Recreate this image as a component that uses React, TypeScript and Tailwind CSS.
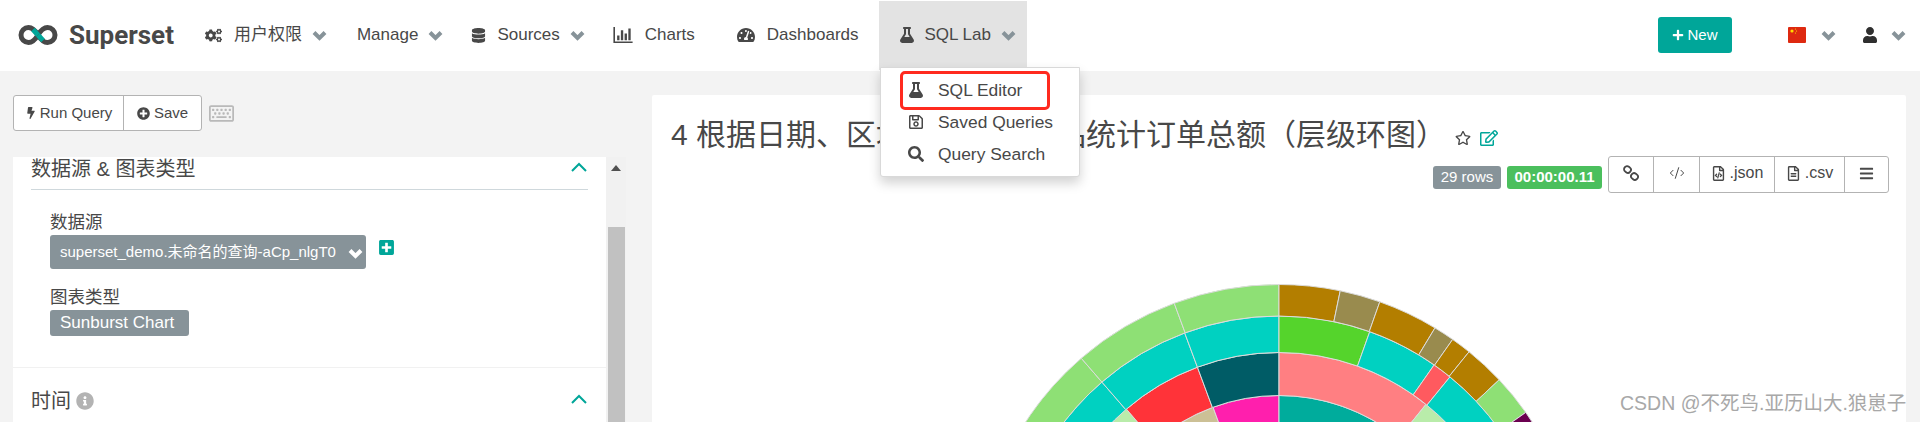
import type { ReactNode } from "react";
import {
  FaBars,
  FaBolt,
  FaCogs,
  FaDatabase,
  FaFlask,
  FaInfoCircle,
  FaPlus,
  FaPlusCircle,
  FaPlusSquare,
  FaRegEdit,
  FaRegFileAlt,
  FaRegFileCode,
  FaRegKeyboard,
  FaRegSave,
  FaRegStar,
  FaSearch,
  FaTachometerAlt,
  FaUser,
} from "react-icons/fa";
import { CodeXml } from "lucide-react";

const FONT = "font-['Liberation_Sans','Noto_Sans_CJK_SC',sans-serif]";

// radii of the rings, inner to outer
const RADII = [135, 191, 234, 270.5, 302];
const CX = 320;
const CY = 386.5;

type Seg = [number, number, string];

const RINGS: Seg[][] = [
  [
    [-70, -20.2, "#ccc096"],
    [-20.2, 0, "#ff1fad"],
    [0, 70, "#00ac9c"],
  ],
  [
    [-70, -40.7, "#b9ecaa"],
    [-40.7, -20.4, "#ff3339"],
    [-20.4, 0, "#005c66"],
    [0, 38.9, "#ff7f82"],
    [38.9, 70, "#b9ecaa"],
  ],
  [
    [-70, -40.9, "#00d1c1"],
    [-40.9, -20.4, "#00d1c1"],
    [-20.4, 0, "#00d1c1"],
    [0, 19.6, "#55d42c"],
    [19.6, 35, "#00d1c1"],
    [35, 39.2, "#ff5a5f"],
    [39.2, 70, "#00d1c1"],
  ],
  [
    [-70, -40.9, "#8ee075"],
    [-40.9, -20.3, "#8ee075"],
    [-20.3, 0, "#8ee075"],
    [0, 11.7, "#b37e00"],
    [11.7, 19.5, "#998b4e"],
    [19.5, 31.1, "#b37e00"],
    [31.1, 35.1, "#998b4e"],
    [35.1, 39, "#b37e00"],
    [39, 46.8, "#b37e00"],
    [46.8, 54.8, "#8ee075"],
    [54.8, 70, "#6b0050"],
  ],
];

function pt(r: number, deg: number) {
  const a = (deg * Math.PI) / 180;
  return `${(CX + r * Math.sin(a)).toFixed(2)} ${(CY - r * Math.cos(a)).toFixed(2)}`;
}

function arc(r0: number, r1: number, a0: number, a1: number) {
  return `M${pt(r0, a0)} L${pt(r1, a0)} A${r1} ${r1} 0 0 1 ${pt(r1, a1)} L${pt(r0, a1)} A${r0} ${r0} 0 0 0 ${pt(r0, a0)} Z`;
}

function Sunburst() {
  return (
    <svg width="640" height="222" viewBox="0 0 640 222" className="mx-auto mt-[7px] shrink-0">
      {RINGS.map((ring, i) =>
        ring.map(([a0, a1, color]) => (
          <path
            key={`${i}-${a0}`}
            d={arc(RADII[i], RADII[i + 1], a0, a1)}
            fill={color}
            stroke="#dcdcdc"
            strokeWidth="1"
          />
        )),
      )}
    </svg>
  );
}

function Logo() {
  return (
    <svg width="40" height="22" viewBox="0 0 40 22" fill="none">
      <path
        d="M20 11 C17 6 14 3.5 10.5 3.5 A7.5 7.5 0 0 0 10.5 18.5 C14 18.5 17 16 20 11 C23 6 26 3.5 29.5 3.5 A7.5 7.5 0 0 1 29.5 18.5 C26 18.5 23 16 20 11 Z"
        stroke="#484848"
        strokeWidth="5"
      />
      <path d="M15 5.5 L20 11" stroke="#00a699" strokeWidth="5" />
      <path d="M20 11 L25 16.5" stroke="#00a699" strokeWidth="5" />
    </svg>
  );
}

function Caret({ className = "" }: { className?: string }) {
  return (
    <svg width="15" height="11" viewBox="0 0 15 11" fill="none" className={className}>
      <path d="M2 2.5 L7.5 8 L13 2.5" stroke="currentColor" strokeWidth="4" />
    </svg>
  );
}

function ChevronUp() {
  return (
    <svg width="16" height="10" viewBox="0 0 16 10" fill="none" className="text-[#00a699]">
      <path d="M1 9 L8 2 L15 9" stroke="currentColor" strokeWidth="2" />
    </svg>
  );
}

function BarChartIcon() {
  return (
    <svg width="20" height="16" viewBox="0 0 18 15" className="mr-[12px]" fill="currentColor">
      <path d="M0 0h1.5v13.5H18V15H0z" />
      <path d="M3.5 8h2.2v4.5H3.5zM7 3h2.2v9.5H7zM10.5 6h2.2v6.5h-2.2zM14 1.5h2.2v11H14z" />
    </svg>
  );
}

function LinkIcon() {
  return (
    <svg width="16" height="16" viewBox="0 0 16 16" fill="none" stroke="currentColor" strokeWidth="1.8">
      <rect x="1" y="1.5" width="7" height="6" rx="2.8" transform="rotate(40 4.5 4.5)" />
      <rect x="8" y="8.5" width="7" height="6" rx="2.8" transform="rotate(40 11.5 11.5)" />
    </svg>
  );
}

function NavItem({ icon, label, caret = true, className = "" }: { icon?: ReactNode; label: string; caret?: boolean; className?: string }) {
  return (
    <div className={`flex items-center text-[17px] text-[#484848] ${className}`}>
      {icon}
      <span>{label}</span>
      {caret && <Caret className="ml-[10px] text-[#879399]" />}
    </div>
  );
}

function Navbar() {
  return (
    <nav className="flex h-[71px] shrink-0 items-center bg-white pb-[1px]">
      <div className="ml-[18px] flex items-center">
        <Logo />
        <span className="ml-[11px] font-['Roboto',sans-serif] text-[26px] font-bold text-[#484848]">Superset</span>
      </div>
      <NavItem className="ml-[31px]" icon={<FaCogs className="mr-[12px] text-[17px]" />} label="用户权限" />
      <NavItem className="ml-[30px]" label="Manage" />
      <NavItem className="ml-[28px]" icon={<FaDatabase className="mr-[11px] text-[15px]" />} label="Sources" />
      <NavItem className="ml-[28px]" icon={<BarChartIcon />} label="Charts" caret={false} />
      <NavItem className="ml-[42px]" icon={<FaTachometerAlt className="mr-[12px] text-[18px]" />} label="Dashboards" caret={false} />
      <div className="ml-[20px] mt-[1px] flex h-[69px] w-[148px] items-center bg-[#e3e3e3] pl-[20px] pb-[1px] text-[17px] text-[#484848]">
        <FaFlask className="mr-[10px] text-[16px]" />
        <span>SQL Lab</span>
        <Caret className="ml-[10px] text-[#879399]" />
      </div>
      <div className="ml-auto flex h-[36px] w-[74px] items-center justify-center rounded-[3px] bg-[#00a699] text-[15px] text-white">
        <FaPlus className="mr-[3px] text-[12px]" />
        New
      </div>
      <svg width="18" height="16" viewBox="0 0 18 16" className="ml-[56px]">
        <rect width="18" height="16" rx="1" fill="#de2910" />
        <circle cx="4" cy="4" r="1.6" fill="#ffde00" />
        <circle cx="7.5" cy="2" r="0.6" fill="#ffde00" />
        <circle cx="8.5" cy="4" r="0.6" fill="#ffde00" />
        <circle cx="7.5" cy="6" r="0.6" fill="#ffde00" />
      </svg>
      <Caret className="ml-[15px] text-[#879399]" />
      <FaUser className="ml-[26px] text-[16px] text-[#2f2f2f]" />
      <Caret className="ml-[13px] mr-[14px] text-[#879399]" />
    </nav>
  );
}

function SqlLabMenu() {
  const items = [
    { icon: <FaFlask />, label: "SQL Editor" },
    { icon: <FaRegSave />, label: "Saved Queries" },
    { icon: <FaSearch />, label: "Query Search" },
  ];
  return (
    <div className="absolute left-[880px] top-[67px] z-10 h-[110px] w-[200px] rounded-b-[3px] border border-[#d9d9d9] bg-white pt-[6px] shadow-[0_6px_12px_rgba(0,0,0,0.18)]">
      {items.map((item) => (
        <div key={item.label} className="flex h-[32px] items-center pl-[27px] text-[17.4px] text-[#484848]">
          <span className="w-[30px] text-[16px]">{item.icon}</span>
          {item.label}
        </div>
      ))}
      <div className="absolute left-[19px] top-[3px] h-[39px] w-[150px] rounded-[5px] border-[3px] border-[#ff2a1f]" />
    </div>
  );
}

function Toolbar() {
  return (
    <div className="flex h-[86px] shrink-0 items-start pt-[24px]">
      <div className="flex h-[36px] rounded-[3px] border border-[#b3b3b3] bg-white text-[15px] text-[#484848]">
        <div className="flex w-[110px] items-center justify-center border-r border-[#b3b3b3]">
          <FaBolt className="mr-[3px] text-[12px]" />
          Run Query
        </div>
        <div className="flex w-[77px] items-center justify-center">
          <FaPlusCircle className="mr-[4px] text-[13px]" />
          Save
        </div>
      </div>
      <FaRegKeyboard className="ml-[7px] mt-[6px] text-[25px] text-[#b9b9b9]" />
    </div>
  );
}

function ControlPanel() {
  return (
    <div className="flex w-[613px] shrink-0 flex-col">
      <Toolbar />
      <div className="flex min-h-0 flex-1">
        <div className="w-[593px] bg-white">
          <div className="h-[211px] border-b border-[#f1f1f1]">
            <div className="mx-[18px] flex h-[33px] items-start justify-between border-b border-[#cfd8dc] text-[20px] leading-[24px] text-[#484848]">
              <span>数据源 &amp; 图表类型</span>
              <div className="mr-[1px] mt-[5px]">
                <ChevronUp />
              </div>
            </div>
            <div className="ml-[37px] mt-[19px] text-[17.5px] leading-[26px] text-[#484848]">数据源</div>
            <div className="ml-[37px] flex items-start">
              <div className="flex h-[34px] w-[316px] items-center justify-between rounded-[3px] bg-[#879399] pl-[10px] pr-[3px] text-[15px] text-white">
                <span>superset_demo.未命名的查询-aCp_nlgT0</span>
                <Caret className="mt-[3px] text-white" />
              </div>
              <FaPlusSquare className="ml-[12px] mt-[4px] text-[17px] text-[#00a699]" />
            </div>
            <div className="ml-[37px] mt-[15px] text-[17.5px] leading-[26px] text-[#484848]">图表类型</div>
            <div className="ml-[37px] flex h-[26px] w-[139px] items-center rounded-[3px] bg-[#879399] pl-[10px] text-[17px] text-white">
              Sunburst Chart
            </div>
          </div>
          <div className="mx-[18px] mt-[18px] flex items-center justify-between text-[20px] text-[#484848]">
            <span className="flex items-center">
              时间
              <FaInfoCircle className="ml-[5px] text-[18px] text-[#b3b3b3]" />
            </span>
            <div className="mr-[1px] mb-[4px]">
              <ChevronUp />
            </div>
          </div>
        </div>
        <div className="flex w-[20px] flex-col items-center bg-[#f1f1f1]">
          <div className="mt-[8px] h-0 w-0 border-x-[5px] border-b-[6px] border-x-transparent border-b-[#505050]" />
          <div className="mt-[56px] w-[17px] flex-1 bg-[#c1c1c1]" />
        </div>
      </div>
    </div>
  );
}

function ChartPanel() {
  return (
    <div className="ml-[26px] mr-[14px] mt-[24px] flex min-w-0 flex-1 flex-col overflow-hidden rounded-t-[2px] bg-white">
      <div className="ml-[19px] mt-[19px] flex h-[40px] items-center text-[#484848]">
        <span className="text-[30px]">4 根据日期、区域、渠道、产品统计订单总额（层级环图）</span>
        <FaRegStar className="ml-[9px] mt-[8px] text-[16px]" />
        <FaRegEdit className="ml-[9px] mt-[8px] text-[18px] text-[#00a699]" />
      </div>
      <div className="mr-[17px] mt-[2px] flex h-[37px] shrink-0 items-start justify-end">
        <div className="mt-[10px] flex items-center gap-[6px]">
          <span className="flex h-[23px] w-[68px] items-center justify-center rounded-[3px] bg-[#879399] text-[15px] text-white">29 rows</span>
          <span className="flex h-[23px] w-[95px] items-center justify-center rounded-[3px] bg-[#4bbf5d] text-[15px] font-bold text-white">00:00:00.11</span>
        </div>
        <div className="ml-[6px] flex h-[37px] rounded-[3px] border border-[#b3b3b3] text-[16px] text-[#484848]">
          <div className="flex w-[45px] items-center justify-center border-r border-[#b3b3b3] pb-[3px]">
            <LinkIcon />
          </div>
          <div className="flex w-[46px] items-center justify-center border-r border-[#b3b3b3] pb-[3px]">
            <CodeXml size={16} strokeWidth={1.5} />
          </div>
          <div className="flex w-[75px] items-center justify-center gap-[4px] border-r border-[#b3b3b3] pb-[3px]">
            <FaRegFileCode className="text-[15px]" />
            .json
          </div>
          <div className="flex w-[70px] items-center justify-center gap-[4px] border-r border-[#b3b3b3] pb-[3px]">
            <FaRegFileAlt className="text-[15px]" />
            .csv
          </div>
          <div className="flex w-[43px] items-center justify-center pb-[3px]">
            <FaBars className="text-[15px]" />
          </div>
        </div>
      </div>
      <Sunburst />
    </div>
  );
}

export default function App() {
  return (
    <div className={`relative flex h-[422px] flex-col overflow-hidden bg-[#f3f3f3] ${FONT}`}>
      <Navbar />
      <div className="flex min-h-0 flex-1 pl-[13px]">
        <ControlPanel />
        <ChartPanel />
      </div>
      <SqlLabMenu />
      <div className="absolute left-[1620px] top-[392px] text-[19.5px] leading-[22px] text-[#a8a8a8]">CSDN @不死鸟.亚历山大.狼崽子</div>
    </div>
  );
}
